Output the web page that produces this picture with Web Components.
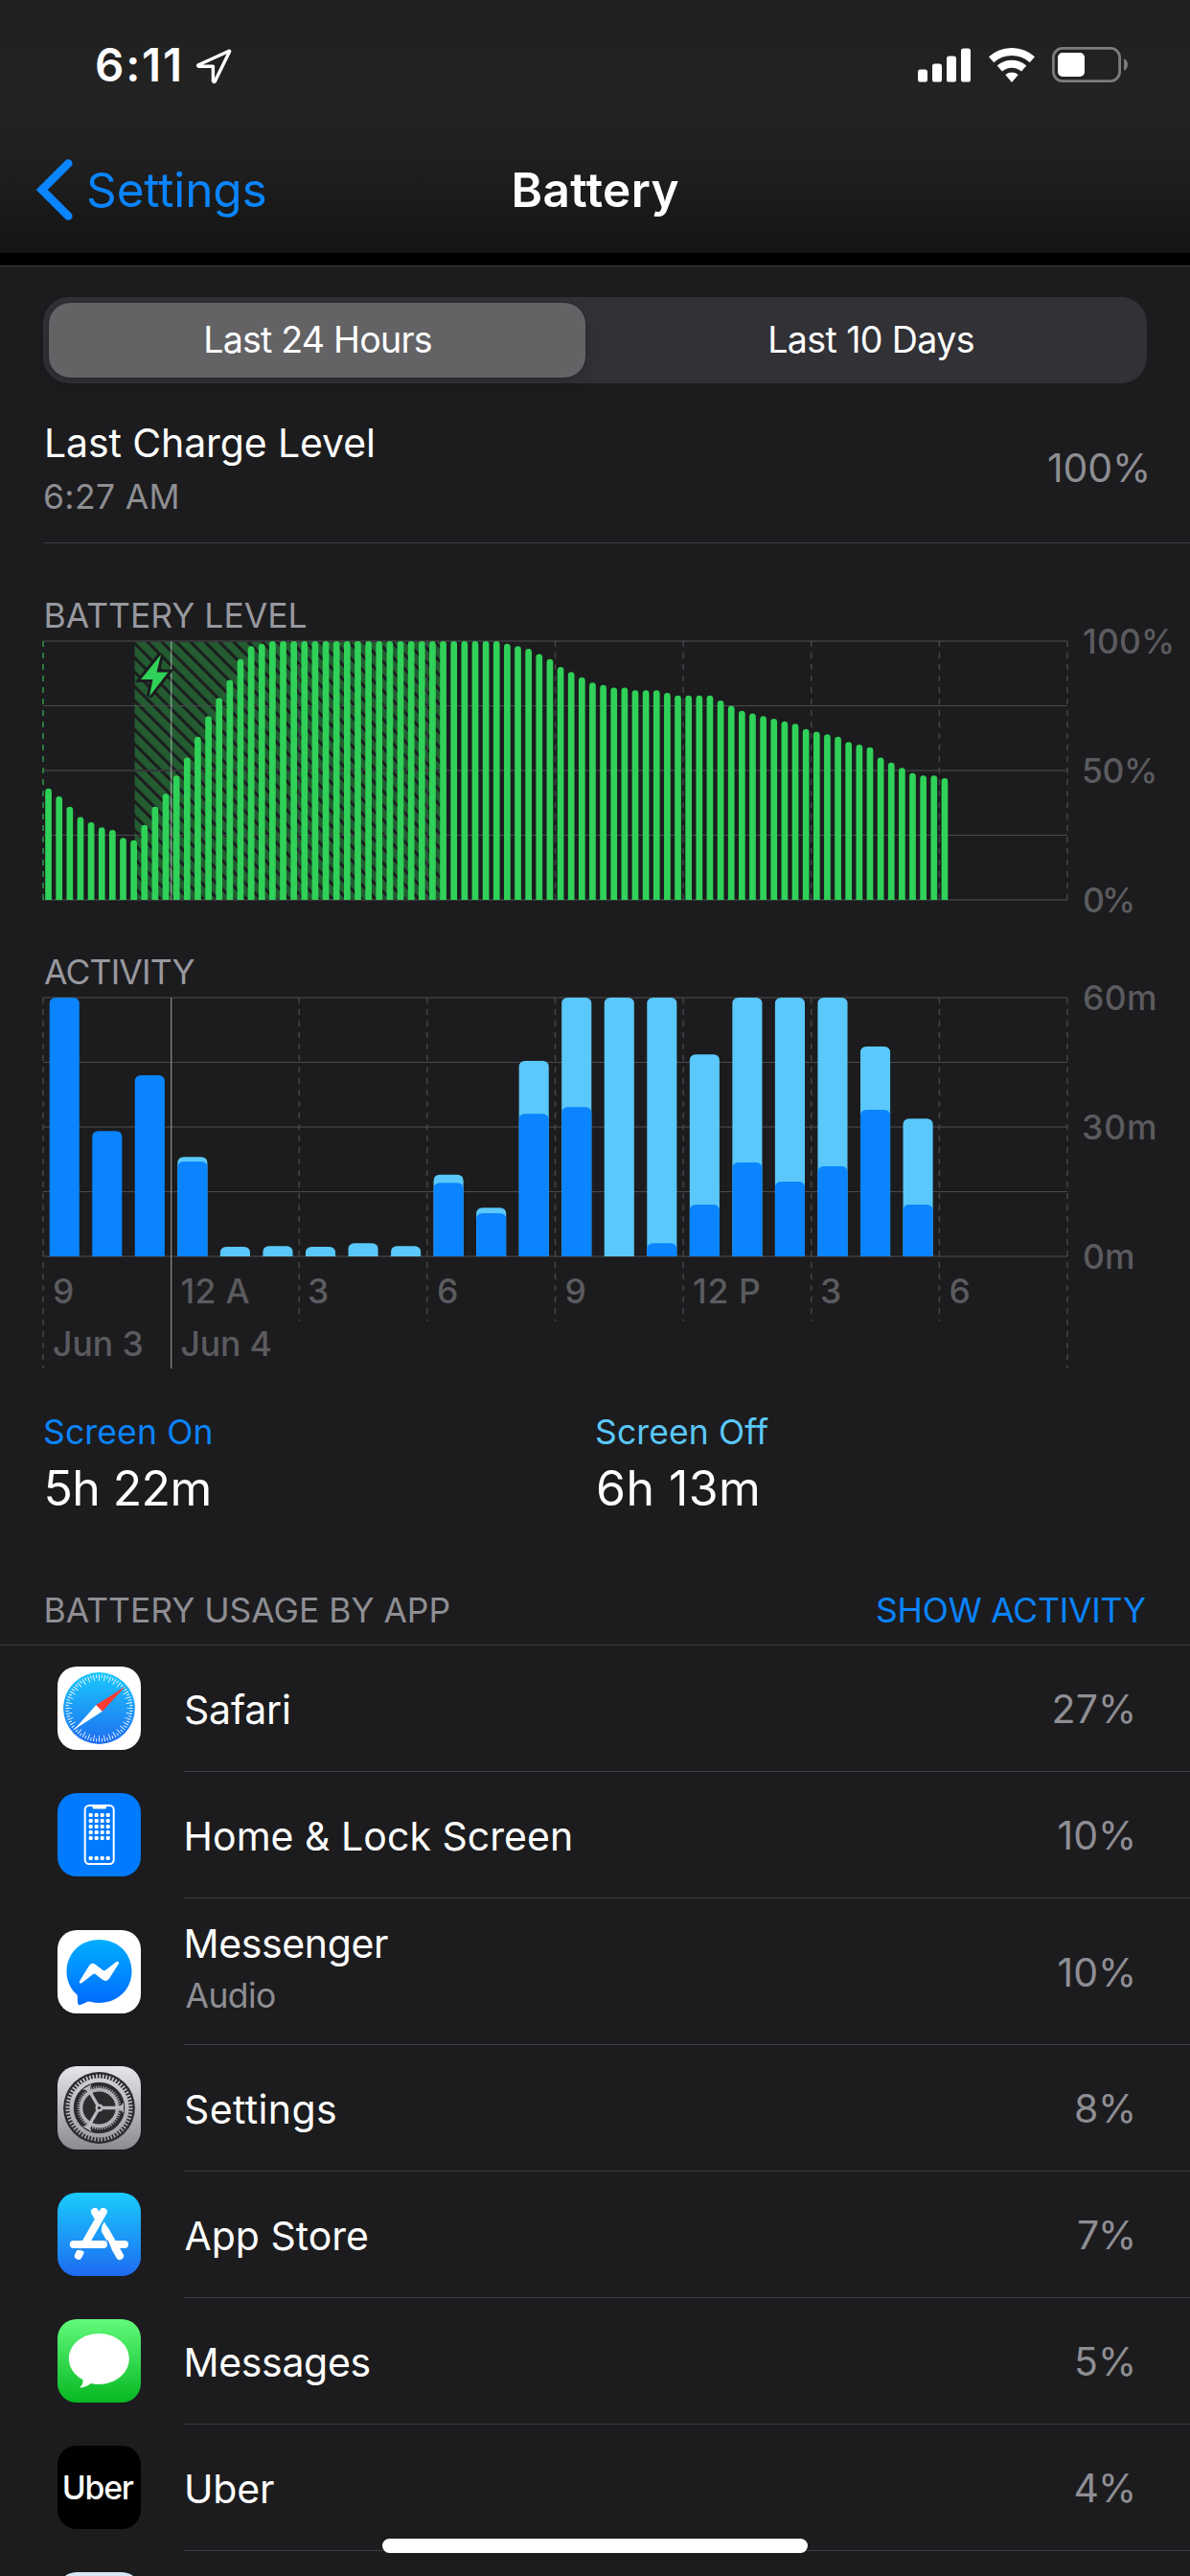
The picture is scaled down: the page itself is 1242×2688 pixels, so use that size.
<!DOCTYPE html>
<html lang="en">
<head>
<meta charset="utf-8">
<title>Battery</title>
<style>
  body {
    margin: 0;
    background: #1c1c1e;
  }
</style>
</head>
<body>
<battery-screen></battery-screen>

<script>
const FONT = "Inter, 'Liberation Sans', sans-serif"
const pen = document.createElement('canvas').getContext('2d')

// letter spacing and left shift that make a run of text span `ink` pixels
const fit = (text, size, weight, ink) => {
  pen.font = `${weight} ${size}px ${FONT}`
  const m = pen.measureText(text)
  const natural = m.actualBoundingBoxLeft + m.actualBoundingBoxRight
  return {
    spacing: text.length > 1 ? (ink - natural) / (text.length - 1) : 0,
    shift: m.actualBoundingBoxLeft
  }
}

const define = (name, html, style, ready) => {
  customElements.define(name, class extends HTMLElement {
    constructor() {
      super()
      this.attachShadow({ mode: 'open' })
    }

    connectedCallback() {
      const markup = typeof html === 'function' ? html(this) : html
      this.shadowRoot.innerHTML = `<style>${style}</style>${markup}`
      if (ready) ready(this)
    }
  })
}

define('fit-text', '<span><slot></slot></span>', `
  :host {
    display: block;
    white-space: nowrap;
    flex: none;
  }

  span {
    display: inline-block;
  }
`, el => {
  const size = el.getAttribute('size') || 41
  const weight = el.getAttribute('weight') || 400
  const ink = Number(el.getAttribute('ink'))
  const inset = Number(el.getAttribute('inset') || 0)
  const { spacing, shift } = fit(el.textContent, size, weight, ink)
  const span = el.shadowRoot.querySelector('span')
  el.style.width = `${ink + inset}px`
  span.style.font = `${weight} ${size}px/var(--line, 50px) ${FONT}`
  span.style.letterSpacing = `${spacing}px`
  span.style.marginLeft = `${inset + shift}px`
})

define('status-bar', `
  <div class="side">
    <fit-text size="47.5" weight="600" ink="86">6:11</fit-text>
    <svg class="arrow" width="38" height="38" viewBox="0 0 38 38">
      <path d="M35 3.2 L3.2 17.7 Q2 18.6 3.4 19.3 H18.4 V34.6 Q19.2 36.2 20.4 34.8 L35.6 3.8 Q35.7 3 35 3.2Z" fill="none" stroke="#fff" stroke-width="3.4" stroke-linejoin="round"/>
    </svg>
  </div>
  <div class="side icons">
    <svg width="55" height="36" viewBox="0 0 55 36" fill="#fff">
      <rect x="0" y="22.5" width="10" height="13" rx="2.6"/>
      <rect x="15" y="16.5" width="10" height="19" rx="2.6"/>
      <rect x="30" y="8.5" width="10" height="27" rx="2.6"/>
      <rect x="45" y="0.5" width="10" height="35" rx="2.6"/>
    </svg>
    <svg width="48" height="36" viewBox="0 0 48 36">
      <g fill="none" stroke="#fff" stroke-width="8">
        <path d="M2.6 12.2 A32 32 0 0 1 45.4 12.2"/>
        <path d="M11.3 21.4 A19.3 19.3 0 0 1 36.7 21.4"/>
      </g>
      <path d="M24 36 L17.3 27.9 A10.6 10.6 0 0 1 30.7 27.9Z" fill="#fff"/>
    </svg>
    <svg width="79" height="37" viewBox="0 0 79 37">
      <rect x="1.4" y="1.4" width="69.2" height="34.2" rx="9.5" fill="none" stroke="#7c7c7c" stroke-width="2.8"/>
      <rect x="6" y="6" width="28" height="25" rx="5" fill="#fff"/>
      <path d="M75 12.3 Q79 14 79 18.5 Q79 23 75 24.8Z" fill="#7c7c7c"/>
    </svg>
  </div>
`, `
  :host {
    display: flex;
    justify-content: space-between;
    align-items: center;
    box-sizing: border-box;
    height: 132px;
    padding: 4px 65px 0 101px;
    color: #fff;
  }

  .side {
    display: flex;
    align-items: center;
    gap: 17px;
  }

  .icons {
    gap: 18.5px;
    margin-top: -1px;
  }

  .arrow {
    margin-top: 2px;
  }
`)

define('nav-bar', `
  <div class="back">
    <svg width="40" height="66" viewBox="0 0 40 66">
      <path d="M34.3 5.5 L6.8 33 L34.3 60.5" fill="none" stroke="#0a84ff" stroke-width="8.6" stroke-linecap="round"/>
    </svg>
    <fit-text size="49.5" ink="184.5">Settings</fit-text>
  </div>
  <fit-text size="49.5" weight="600" ink="172" inset="3">Battery</fit-text>
  <div></div>
`, `
  :host {
    display: grid;
    grid-template-columns: 1fr auto 1fr;
    align-items: center;
    box-sizing: border-box;
    height: 132px;
    padding: 0 37px;
    color: #fff;
  }

  .back {
    display: flex;
    align-items: center;
    gap: 15px;
    color: #0a84ff;
  }
`)

define('segmented-control', `
  <div class="on"><fit-text size="37.6" ink="234.5" inset="3">Last 24 Hours</fit-text></div>
  <div><fit-text size="37.6" ink="211.5" inset="3">Last 10 Days</fit-text></div>
`, `
  :host {
    display: grid;
    grid-template-columns: 560px 1fr;
    gap: 15px;
    box-sizing: border-box;
    height: 90px;
    margin: 32px 45px 0;
    padding: 6px 6px 6px 6px;
    border-radius: 27px;
    background: #313136;
    color: #fff;
  }

  div {
    display: flex;
    align-items: center;
    justify-content: center;
    border-radius: 22px;
  }

  .on {
    background: #636366;
    box-shadow: 0 6px 16px rgba(0, 0, 0, .14), 0 0 2px rgba(0, 0, 0, .3);
  }
`)

define('charge-row', `
  <div>
    <fit-text ink="340" inset="4">Last Charge Level</fit-text>
    <fit-text class="time" size="35.5" ink="137.5" inset="2">6:27 AM</fit-text>
  </div>
  <fit-text class="level" ink="103">100%</fit-text>
`, `
  :host {
    display: flex;
    justify-content: space-between;
    box-sizing: border-box;
    height: 167px;
    margin-left: 45px;
    padding: 37px 45px 0 0;
    border-bottom: 1px solid #3d3d41;
    color: #fff;
  }

  .time {
    --line: 43px;
    margin-top: 10px;
  }

  .time, .level {
    color: #8e8e93;
  }

  .level {
    margin-top: 26px;
  }
`)

// both charts share the same plot box: 45..1114 across, 270px tall
const LEFT = 45
const RIGHT = 1114
const COLUMN = (RIGHT - LEFT) / 8

const grid = top => [0, 67.5, 135, 202.5, 270].map((dy, i) => i % 2
  ? `<rect x="${LEFT}" y="${top + Math.floor(dy)}" width="${RIGHT - LEFT}" height="1" fill="#4a4a4c"/>`
  : `<rect x="${LEFT}" y="${top + dy - 1}" width="${RIGHT - LEFT}" height="2" fill="#363638"/>`
).join('')

const label = (x, baseline, text, ink) => {
  const { spacing, shift } = fit(text, 35.5, 500, ink)
  return `<text x="${x + shift}" y="${baseline}" letter-spacing="${spacing}">${text}</text>`
}

const dash = (i, top, bottom, colour = '#48484b') => {
  const x = LEFT + COLUMN * i
  return `<path d="M${x} ${top}V${bottom}" stroke="${colour}" stroke-width="1.4" stroke-dasharray="6 6"/>`
}

const chartStyle = `
  :host {
    display: block;
  }

  svg {
    display: block;
    overflow: visible;
  }

  text {
    font: 500 35.5px ${FONT};
    fill: #5b5b5f;
  }
`

const levels = [
  43, 40, 36, 32, 30, 28, 27, 24, 23, 29, 36, 41, 48, 55, 63, 71, 78, 85, 93, 98, 99,
  ...Array(22).fill(100),
  99, 98, 97, 95, 93, 90, 88, 86, 84, 83, 82, 82, 81, 81, 81, 80, 79, 79, 79, 79, 77, 75,
  73, 72, 71, 70, 69, 68, 66, 65, 64, 63, 61, 60, 59, 55, 53, 51, 49, 48, 48, 47
]

define('level-chart', () => {
  const top = 669
  const bottom = 939
  const slot = (RIGHT - LEFT) / 96
  const bars = levels.map((level, i) => {
    const x = LEFT + slot * i + 2.2
    const y = bottom - level * 2.7
    return `<path d="M${x} ${bottom}V${y + 3.3}a3.3 3.3 0 0 1 6.7 0V${bottom}Z"/>`
  }).join('')
  return `
    <svg width="1242" height="328" viewBox="0 664 1242 328">
      <defs>
        <pattern id="charging" width="10.607" height="10.607" patternUnits="userSpaceOnUse" patternTransform="translate(196 669) rotate(-45)">
          <rect width="10.607" height="10.607" fill="#235c31"/>
          <rect width="3.1" height="10.607" fill="#1c1c1e"/>
        </pattern>
      </defs>
      <rect x="140.6" y="${top}" width="325" height="270" fill="url(#charging)"/>
      ${grid(top)}
      ${dash(0, top, bottom, '#30a04c')}
      ${[2, 3, 4, 5, 6, 7, 8].map(i => dash(i, top, bottom)).join('')}
      <rect x="178" y="${top}" width="1.3" height="270" fill="#fff" opacity=".45"/>
      <g fill="#30d158">${bars}</g>
      <path d="M168 683L147 709H159.5L156 726.5L175.5 701.5H163.5Z" fill="#30d158" stroke="#1c1c1e" stroke-width="6" paint-order="stroke"/>
      ${label(1131, 682, '100%', 92)}
      ${label(1131, 817, '50%', 74)}
      ${label(1131, 952, '0%', 51)}
    </svg>
  `
}, chartStyle)

// bar heights in px: [screen on + off, screen on]
const hours = [
  [270, 270], [130.7, 130.7], [189, 189], [103.7, 99], [10, 0], [10.7, 0], [10, 0],
  [13.7, 0], [10.7, 0], [85.3, 76.7], [50.7, 45], [204, 148.7], [270, 155.7], [270, 0],
  [270, 13.7], [210.7, 54], [270, 98], [270, 78], [270, 94], [219, 153], [143.7, 54]
]

define('activity-chart', () => {
  const top = 1041
  const bottom = 1311
  const bar = (i, height, colour) => {
    const x = LEFT + COLUMN / 3 * i + 6.7
    return `<path d="M${x} ${bottom}V${bottom - height + 6.5}q0 -6.5 6.5 -6.5h18.1q6.5 0 6.5 6.5V${bottom}Z" fill="${colour}"/>`
  }
  const bars = hours.map(([all, on], i) =>
    (all > on ? bar(i, all, '#5ac8fa') : '') + (on ? bar(i, on, '#0a84ff') : '')
  ).join('')
  return `
    <svg width="1242" height="404" viewBox="0 1036 1242 404">
      ${grid(top)}
      ${[2, 3, 4, 5, 6, 7].map(i => dash(i, top, 1378.5)).join('')}
      ${dash(0, top, 1428)}
      ${dash(8, top, 1428)}
      <rect x="178" y="${top}" width="1.3" height="387" fill="#858587"/>
      ${bars}
      ${label(1131, 1054, '60m', 74)}
      ${label(1131, 1189, '30m', 74)}
      ${label(1131, 1324, '0m', 51)}
      ${label(56, 1360, '9', 19)}
      ${label(189.5, 1360, '12 A', 71)}
      ${label(323, 1360, '3', 19)}
      ${label(457, 1360, '6', 19)}
      ${label(590.5, 1360, '9', 19)}
      ${label(724, 1360, '12 P', 69)}
      ${label(858, 1360, '3', 19)}
      ${label(991.5, 1360, '6', 19)}
      ${label(56, 1415, 'Jun 3', 92.5)}
      ${label(189.5, 1415, 'Jun 4', 93)}
    </svg>
  `
}, chartStyle)

define('chart-title', '<slot></slot>', `
  :host {
    display: block;
    height: 44px;
    padding-left: 45px;
    color: #98989f;
    --line: 46px;
  }
`)

define('screen-stat', `
  <div class="name"><slot name="name"></slot></div>
  <slot></slot>
`, `
  :host {
    display: block;
    color: #fff;
    --line: 60px;
  }

  .name {
    height: 44px;
    margin-bottom: 7px;
    color: var(--tint);
    --line: 46px;
  }

  ::slotted([slot=name]) {
    --line: 46px;
  }
`)

const ticks = (r, width, count, fill, colour, offset = 0) =>
  `<circle cx="43.5" cy="43.5" r="${r}" fill="none" stroke="${colour}" stroke-width="${width}" pathLength="${count * 10}" stroke-dasharray="${fill} ${10 - fill}" stroke-dashoffset="${offset}"/>`

const gradient = (id, from, to) => `
  <linearGradient id="${id}" gradientUnits="userSpaceOnUse" x1="0" y1="0" x2="0" y2="87">
    <stop offset="0" stop-color="${from}"/>
    <stop offset="1" stop-color="${to}"/>
  </linearGradient>
`

const icons = {
  safari: () => `
    ${gradient('sky', '#1bd0fd', '#1e66f0')}
    <rect width="87" height="87" fill="#fff"/>
    <circle cx="43.5" cy="43.5" r="37.4" fill="url(#sky)"/>
    ${ticks(31.8, 6.4, 36, 1.5, '#fff', .75)}
    ${ticks(33.3, 3.4, 36, 1.5, '#fff', 5.75)}
    <path d="M70.8 20.8L40.2 40.2L46.8 46.8Z" fill="#ff3b30"/>
    <path d="M17.2 66L40.2 40.2L46.8 46.8Z" fill="#fff"/>
  `,
  home: () => `
    <rect width="87" height="87" fill="#007aff"/>
    <rect x="28.7" y="13" width="30" height="61" rx="4.5" fill="none" stroke="#fff" stroke-width="2"/>
    <path d="M36.5 12.5H51V15Q51 16.5 49.5 16.5H38Q36.5 16.5 36.5 15Z" fill="#fff"/>
    <g fill="#fff">
      ${[22.9, 28.9, 34.9, 40.9, 46.9, 68].map(y => [34.7, 40.7, 46.7, 52.7].map(x =>
        `<rect x="${x - 2}" y="${y - 2}" width="4" height="4" rx="1.2"/>`).join('')).join('')}
    </g>
  `,
  messenger: () => `
    ${gradient('chat', '#00b9ff', '#0060ff')}
    <rect width="87" height="87" fill="#fff"/>
    <path d="M43.5 10C24 10 9.5 24.3 9.5 43C9.5 53 13.5 61.5 20.3 67.3C21.3 68.3 20.8 73 21.2 76.5Q21.8 78.8 24 78L31.5 74.8Q33 74.3 34.5 74.8Q39 76 43.5 76C63 76 77.5 61.7 77.5 43C77.5 24.3 63 10 43.5 10Z" fill="url(#chat)"/>
    <path d="M23 53.2L33 37.3Q35.7 33.2 39.7 36L47.6 41.9Q48.7 42.7 49.9 41.9L61.6 33Q64.5 31.8 63.9 34.9L54.1 50.5Q51.4 54.6 47.4 51.9L39.5 46Q38.4 45.2 37.2 46L25.2 55.2Q22.1 56.3 23 53.2Z" fill="#fff"/>
  `,
  settings: () => `
    ${gradient('metal', '#e5e5ea', '#8b8b90')}
    ${gradient('gear', '#d9d9de', '#98989d')}
    <rect width="87" height="87" fill="url(#metal)"/>
    <circle cx="43.5" cy="43.5" r="37.4" fill="#2c2c2e"/>
    ${ticks(32.8, 4.4, 60, 4.8, 'url(#gear)')}
    <circle cx="43.5" cy="43.5" r="28.9" fill="none" stroke="url(#gear)" stroke-width="4.4"/>
    ${ticks(21.6, 2.6, 54, 4.8, '#a5a5a9')}
    <circle cx="43.5" cy="43.5" r="18.9" fill="none" stroke="#b2b2b6" stroke-width="3.6"/>
    <g fill="url(#gear)">
      ${[0, 120, 240].map(a => `<path transform="rotate(${a} 43.5 43.5)" d="M43.5 41.8H64Q67 41.5 69 38V49Q67 45.5 64 45.2H43.5Z"/>`).join('')}
    </g>
    <circle cx="43.5" cy="43.5" r="4" fill="#b8b8bc"/>
    <circle cx="43.5" cy="43.5" r="1.6" fill="#2c2c2e"/>
  `,
  store: () => `
    ${gradient('store', '#1bcbfd', '#1d6bf1')}
    <rect width="87" height="87" fill="url(#store)"/>
    <g fill="none" stroke="#fff" stroke-width="8" stroke-linecap="round">
      <path d="M47.8 20L29.5 52"/>
      <path d="M39 20L43 27"/>
      <path d="M50 39.5L65 66"/>
      <path d="M16.8 54H48"/>
      <path d="M62 54H70"/>
      <path d="M23.5 62.5L21.8 65.8"/>
    </g>
    <path d="M46 37.5Q46.3 33.5 48.9 30.5L54 39.5L47 43Z" fill="#fff"/>
    <path d="M51.6 49.5Q53.5 54 51.8 58.5H56.5L52.5 49.5Z" fill="#1d8cf6"/>
    <path d="M17 59.3Q23 57.8 28.5 60.8" fill="none" stroke="#1e89f5" stroke-width="1.8"/>
  `,
  messages: () => `
    ${gradient('sms', '#62fa7b', '#06b822')}
    <rect width="87" height="87" fill="url(#sms)"/>
    <path d="M43.3 15C26 15 11.9 26.5 11.9 41.2C11.9 50.3 17.5 58.3 26.3 63C27.3 66 25.5 69.5 22.8 71.6C27 71.5 31.5 69.8 34.8 67C37.5 67.5 40.3 67.9 43.3 67.9C60.7 67.9 74.8 56 74.8 41.2C74.8 26.5 60.7 15 43.3 15Z" fill="#fff"/>
  `,
  uber: () => {
    const { spacing, shift } = fit('Uber', 33.8, 500, 73)
    return `
      <rect width="87" height="87"/>
      <text x="${6.8 + shift}" y="55.5" letter-spacing="${spacing}" fill="#fff" style="font: 500 33.8px ${FONT}">Uber</text>
    `
  },
  next: () => '<rect width="87" height="87" fill="#d9e8f6"/>'
}

define('app-icon', el => `
  <svg width="87" height="87" viewBox="0 0 87 87">${icons[el.getAttribute('name')]()}</svg>
`, `
  :host {
    display: block;
    flex: none;
    width: 87px;
    height: 87px;
    border-radius: 20px;
    overflow: hidden;
  }

  svg {
    display: block;
  }
`)

define('app-row', el => `
  <app-icon name="${el.getAttribute('icon')}"></app-icon>
  <div class="body">
    <div class="names">
      <slot></slot>
      <slot name="detail"></slot>
    </div>
    <slot name="share"></slot>
  </div>
`, `
  :host {
    display: flex;
    align-items: center;
    gap: 45px;
    height: 132px;
    padding-left: 60px;
    color: #fff;
  }

  :host([stacked]) {
    height: 153px;
  }

  app-icon {
    margin-bottom: 1px;
  }

  .body {
    display: flex;
    flex: 1;
    align-items: center;
    justify-content: space-between;
    align-self: stretch;
    padding-right: 60px;
    border-bottom: 1px solid #3d3d41;
  }

  .names {
    padding-top: 3px;
  }

  :host([stacked]) .names {
    padding: 0 0 5px;
  }

  ::slotted([slot=detail]) {
    margin-top: 7px;
    color: #8e8e93;
    --line: 46px;
  }

  ::slotted([slot=share]) {
    color: #8e8e93;
    padding-top: 1px;
  }
`)

define('list-header', '<slot></slot>', `
  :host {
    display: flex;
    justify-content: space-between;
    height: 44px;
    padding: 75px 46px 14px 45px;
    border-bottom: 1px solid #3d3d41;
    color: #8e8e93;
    --line: 46px;
  }
`)

const apps = [
  ['safari', 'Safari', 108, 2, '27%', 81.5],
  ['home', 'Home &amp; Lock Screen', 401.5, 2.5, '10%', 77.5],
  ['messenger', 'Messenger', 210.5, 2.5, '10%', 77.5, '<fit-text slot="detail" size="35.5" ink="93.5" inset="1.5">Audio</fit-text>'],
  ['settings', 'Settings', 156, 2, '8%', 59],
  ['store', 'App Store', 189.5, 1.5, '7%', 57],
  ['messages', 'Messages', 191, 2.5, '5%', 58],
  ['uber', 'Uber', 91, 3, '4%', 59.5]
]

define('battery-screen', `
  <header>
    <status-bar></status-bar>
    <nav-bar></nav-bar>
  </header>
  <main>
    <segmented-control></segmented-control>
    <charge-row></charge-row>
    <chart-title class="first"><fit-text size="35.5" ink="271" inset="3.5">BATTERY LEVEL</fit-text></chart-title>
    <level-chart></level-chart>
    <chart-title><fit-text size="35.5" ink="157.5" inset="1">ACTIVITY</fit-text></chart-title>
    <activity-chart></activity-chart>
    <div class="stats">
      <screen-stat style="--tint: #0a84ff">
        <fit-text slot="name" size="35.5" ink="173.5" inset="2">Screen On</fit-text>
        <fit-text size="50" ink="169" inset="3.5">5h 22m</fit-text>
      </screen-stat>
      <screen-stat style="--tint: #5ac8fa">
        <fit-text slot="name" size="35.5" ink="179" inset="2">Screen Off</fit-text>
        <fit-text size="50" ink="166" inset="3">6h 13m</fit-text>
      </screen-stat>
    </div>
    <list-header>
      <fit-text size="35.5" ink="420" inset="3.5">BATTERY USAGE BY APP</fit-text>
      <fit-text class="link" size="35.5" ink="280">SHOW ACTIVITY</fit-text>
    </list-header>
    ${apps.map(([icon, name, ink, inset, share, shareInk, detail = '']) => `
      <app-row icon="${icon}" ${detail && 'stacked'}>
        <fit-text ink="${ink}" inset="${inset}">${name}</fit-text>
        ${detail}
        <fit-text slot="share" ink="${shareInk}">${share}</fit-text>
      </app-row>
    `).join('')}
    <app-row icon="next"></app-row>
  </main>
  <div class="home"></div>
`, `
  :host {
    display: block;
    position: relative;
    width: 1242px;
    height: 2688px;
    overflow: hidden;
    background: #1c1c1e;
    font-family: ${FONT};
  }

  header {
    height: 264px;
    background: linear-gradient(#1f1f1f, #232323 38%, #1f1f1f 65%, #141414);
    border-bottom: 13px solid #000;
  }

  main {
    display: flow-root;
    border-top: 1px solid #3d3d41;
  }

  .first {
    padding-top: 53px;
  }

  .stats {
    display: grid;
    grid-template-columns: 1fr 1fr;
    padding: 32px 45px 0;
  }

  .link {
    color: #0a84ff;
  }

  /* home indicator floats over the list */
  .home {
    position: absolute;
    left: 399px;
    bottom: 24px;
    width: 444px;
    height: 15px;
    border-radius: 8px;
    background: #fff;
  }
`)
</script>
</body>
</html>
